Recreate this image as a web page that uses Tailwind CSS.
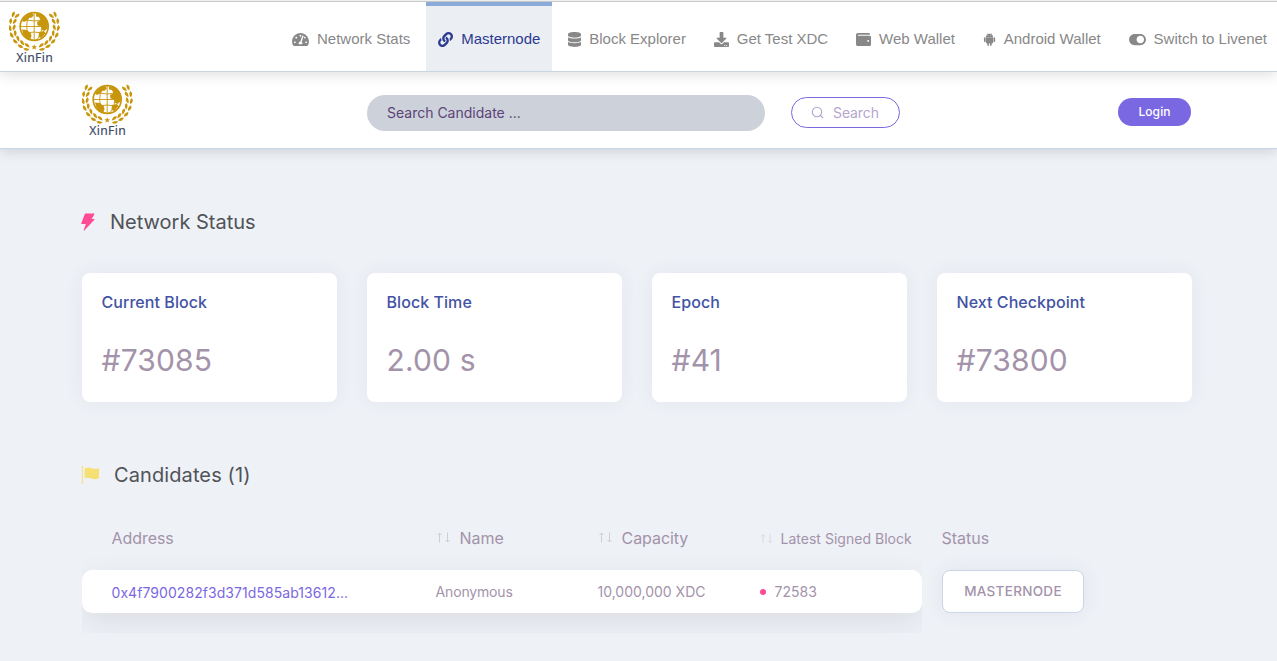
<!DOCTYPE html>
<html lang="en">
<head>
<meta charset="utf-8">
<title>XinFin Masternode</title>
<script src="https://cdn.jsdelivr.net/npm/@tailwindcss/browser@4"></script>
</head>
<body class="h-[661px] overflow-hidden border-t border-[#eeefef] bg-[#eef1f6] font-['Inter',sans-serif] text-[#a393aa]">
<svg class="hidden">
  <defs>
    <g id="leaf">
      <path d="M-2.400 -23.600Q.8 -27.400 4 -24.200Q1 -21.600 -2.400 -23.600Z"/>
      <path d="M-1.800 -21.400Q1.200 -16.800 4.400 -19.200Q2.400 -22.400 -1.800 -21.400Z"/>
    </g>
    <g id="branch">
      <use href="#leaf" transform="rotate(-62)"/>
      <use href="#leaf" transform="rotate(-79)"/>
      <use href="#leaf" transform="rotate(-96)"/>
      <use href="#leaf" transform="rotate(-113)"/>
      <use href="#leaf" transform="rotate(-130)"/>
      <use href="#leaf" transform="rotate(-147)"/>
      <use href="#leaf" transform="rotate(-163)"/>
    </g>
    <symbol id="logo" viewBox="0 0 52 54">
      <g fill="#c8960c">
        <use href="#branch" transform="translate(25.200 15.500)"/>
        <use href="#branch" transform="translate(25.200 15.500) scale(-1 1)"/>
        <path d="M25.200 33.300l.8 1.900 2 .1-1.500 1.300.5 2-1.800-1.100-1.800 1.100.5-2-1.500-1.300 2-.1z"/>
      </g>
      <circle cx="25.200" cy="15.500" r="14" fill="#fff" stroke="#c8960c" stroke-width="1.700"/>
      <g fill="none" stroke="#c8960c" stroke-width=".9">
        <path d="M25.200 1.500v28M11.200 15.500h28M13.500 8.500q11.700 3 23.400 0M13.500 22.500q11.700-3 23.400 0"/>
        <ellipse cx="25.200" cy="15.500" rx="7.500" ry="14"/>
      </g>
      <path fill="#c8960c" d="M13 10Q16 3.500 22.500 2l2.500 2-2 2.500-3 .5-2 2.500-3 1.500zM27 3l4-1.300Q38 5 39 12l-.5 5.500-3 2.500-2.500-1-.5-3.500-4-1-.5-3.500 4-2-2-3-3-.5zM13 18.500l5 .5 4 3.500.5 3-2.500 3.500Q14 25.500 13 18.500zM30 21l5-1 1.500 2-4 5-3-1z"/>
      <text x="25.500" y="51" text-anchor="middle" textLength="36.500" font-family="Noto Sans, sans-serif" font-size="12.200" fill="#3c4866" stroke="#3c4866" stroke-width=".15">XinFin</text>
    </symbol>
    <symbol id="sort" viewBox="0 0 16 12">
      <path fill="none" stroke="currentColor" d="M3.500 10.500V1M1.500 3l2-2 2 2M11.500.5V10M9.500 8l2 2 2-2"/>
    </symbol>
  </defs>
</svg>

<header class="relative z-20 flex h-[71px] justify-between border-y border-t-[#c6c9c9] border-b-[#c9d6e2] bg-white pr-2.5 pl-[9px] shadow-[0_2px_14px_rgba(0,0,0,0.14)]">
  <svg class="mt-[9px] h-[54px] w-[52px]"><use href="#logo"/></svg>
  <nav class="flex gap-[3.85px] font-['Liberation_Sans',sans-serif] text-[15px] text-[#888] [&_svg]:h-[15px] [&_svg]:fill-current">
    <a class="flex items-center gap-2 px-3 pt-[5px]"><svg class="w-[17px]" viewBox="0 0 576 512"><path d="M288 32C128.940 32 0 160.940 0 320c0 52.800 14.250 102.260 39.060 144.800 5.610 9.620 16.300 15.200 27.440 15.200h443c11.140 0 21.830-5.580 27.440-15.200C561.750 422.260 576 372.800 576 320c0-159.060-128.940-288-288-288zm0 64c14.710 0 26.580 10.130 30.320 23.650-1.110 2.260-2.640 4.230-3.450 6.670l-9.220 27.670c-5.130 3.490-10.970 6.010-17.640 6.010-17.670 0-32-14.330-32-32S270.330 96 288 96zM96 384c-17.670 0-32-14.330-32-32s14.330-32 32-32 32 14.330 32 32-14.330 32-32 32zm48-160c-17.670 0-32-14.330-32-32s14.330-32 32-32 32 14.330 32 32-14.330 32-32 32zm246.770-72.410l-61.330 184C343.130 347.330 352 364.540 352 384c0 11.720-3.380 22.550-8.880 32H232.880c-5.500-9.450-8.880-20.280-8.880-32 0-33.940 26.500-61.430 59.900-63.590l61.340-184.010c4.170-12.560 17.730-19.450 30.360-15.170 12.570 4.190 19.350 17.790 15.170 30.360zm14.660 57.200l15.520-46.550c3.470-1.290 7.130-2.230 11.050-2.230 17.670 0 32 14.330 32 32s-14.330 32-32 32c-11.380-.01-20.890-6.280-26.570-15.220zM480 384c-17.670 0-32-14.330-32-32s14.330-32 32-32 32 14.330 32 32-14.330 32-32 32z"/></svg>Network Stats</a>
    <a class="flex items-center gap-2 border-t-4 border-[#8aabd8] bg-[#ebeef3] px-3 pt-px text-[#2c3b91]"><svg class="w-[15px]" viewBox="0 0 512 512"><path d="M326.612 185.391c59.747 59.809 58.927 155.698.36 214.590-.11.120-.24.250-.36.370l-67.200 67.200c-59.270 59.270-155.699 59.262-214.960 0-59.270-59.260-59.270-155.700 0-214.960l37.106-37.106c9.840-9.840 26.786-3.300 27.294 10.606.648 17.722 3.826 35.527 9.690 52.721 1.986 5.822.567 12.262-3.783 16.612l-13.087 13.087c-28.026 28.026-28.905 73.660-1.155 101.960 28.024 28.579 74.086 28.749 102.325.51l67.200-67.190c28.191-28.191 28.073-73.757 0-101.830-3.701-3.694-7.429-6.564-10.341-8.569a16.037 16.037 0 0 1-6.947-12.606c-.396-10.567 3.348-21.456 11.698-29.806l21.054-21.055c5.521-5.521 14.182-6.199 20.584-1.731a152.482 152.482 0 0 1 20.522 17.197zM467.547 44.449c-59.261-59.262-155.690-59.270-214.960 0l-67.200 67.200c-.12.120-.25.250-.36.370-58.566 58.892-59.387 154.781.36 214.590a152.454 152.454 0 0 0 20.521 17.196c6.402 4.468 15.064 3.789 20.584-1.731l21.054-21.055c8.350-8.350 12.094-19.239 11.698-29.806a16.037 16.037 0 0 0-6.947-12.606c-2.912-2.005-6.640-4.875-10.341-8.569-28.073-28.073-28.191-73.639 0-101.830l67.200-67.190c28.239-28.239 74.300-28.069 102.325.51 27.750 28.300 26.872 73.934-1.155 101.960l-13.087 13.087c-4.350 4.350-5.769 10.790-3.783 16.612 5.864 17.194 9.042 34.999 9.690 52.721.509 13.906 17.454 20.446 27.294 10.606l37.106-37.106c59.271-59.259 59.271-155.699.001-214.959z"/></svg>Masternode</a>
    <a class="flex items-center gap-2 px-3 pt-[5px]"><svg class="w-[13px]" viewBox="0 0 448 512"><path d="M448 73.143v45.714C448 159.143 347.667 192 224 192S0 159.143 0 118.857V73.143C0 32.857 100.333 0 224 0s224 32.857 224 73.143zM448 176v102.857C448 319.143 347.667 352 224 352S0 319.143 0 278.857V176c48.125 33.143 136.208 48.572 224 48.572S399.874 209.143 448 176zm0 160v102.857C448 479.143 347.667 512 224 512S0 479.143 0 438.857V336c48.125 33.143 136.208 48.572 224 48.572S399.874 369.143 448 336z"/></svg>Block Explorer</a>
    <a class="flex items-center gap-2 px-3 pt-[5px]"><svg class="w-[15px]" viewBox="0 0 512 512"><path d="M216 0h80c13.300 0 24 10.700 24 24v168h87.700c17.800 0 26.700 21.500 14.100 34.100L269.700 378.300c-7.500 7.500-19.800 7.500-27.300 0L90.100 226.100c-12.600-12.600-3.700-34.100 14.100-34.100H192V24c0-13.300 10.700-24 24-24zm296 376v112c0 13.300-10.700 24-24 24H24c-13.300 0-24-10.700-24-24V376c0-13.300 10.700-24 24-24h146.700l49 49c20.100 20.100 52.500 20.100 72.600 0l49-49H488c13.300 0 24 10.700 24 24zm-124 88c0-11-9-20-20-20s-20 9-20 20 9 20 20 20 20-9 20-20zm64 0c0-11-9-20-20-20s-20 9-20 20 9 20 20 20 20-9 20-20z"/></svg>Get Test XDC</a>
    <a class="flex items-center gap-2 px-3 pt-[5px]"><svg class="w-[15px]" viewBox="0 0 512 512"><path d="M461.200 128H80c-8.840 0-16-7.160-16-16s7.160-16 16-16h384c8.840 0 16-7.160 16-16 0-26.510-21.490-48-48-48H64C28.650 32 0 60.650 0 96v320c0 35.350 28.650 64 64 64h397.200c28.020 0 50.800-21.530 50.800-48V176c0-26.470-22.780-48-50.800-48zM416 336c-17.670 0-32-14.330-32-32s14.330-32 32-32 32 14.330 32 32-14.330 32-32 32z"/></svg>Web Wallet</a>
    <a class="flex items-center gap-2 px-3 pt-[5px]"><svg class="w-[13px]" viewBox="0 0 448 512"><path d="M89.600 204.500v115.800c0 15.400-12.100 27.700-27.500 27.700-15.300 0-30.100-12.400-30.100-27.700V204.500c0-15.100 14.800-27.500 30.100-27.500 15.100 0 27.500 12.400 27.500 27.500zm10.800 157c0 16.400 13.200 29.600 29.600 29.600h19.900l.3 61.100c0 36.900 55.200 36.600 55.200 0v-61.100h37.200v61.100c0 36.700 55.500 36.800 55.500 0v-61.100h20.200c16.200 0 29.400-13.200 29.400-29.600V182.100H100.400v179.400zm248-189.100H99.300c0-42.800 25.600-80 63.600-99.400l-19.100-35.300c-2.800-4.900 4.300-8 6.700-3.800l19.400 35.600c34.900-15.500 75-14.700 108.300 0L297.500 34c2.500-4.300 9.500-1.100 6.700 3.800L285.100 73c37.700 19.400 63.300 56.600 63.300 99.400zm-170.700-55.500c0-5.700-4.600-10.500-10.500-10.500-5.700 0-10.200 4.800-10.200 10.500s4.600 10.500 10.200 10.500c5.900 0 10.500-4.800 10.500-10.500zm97.800 0c0-5.700-4.600-10.500-10.200-10.500-5.900 0-10.500 4.800-10.500 10.500s4.600 10.500 10.500 10.500c5.600 0 10.200-4.800 10.200-10.500zm113.100 60.100c-15.100 0-27.500 12.100-27.500 27.500v115.800c0 15.400 12.400 27.700 27.500 27.700 15.400 0 30.100-12.400 30.100-27.700V204.500c0-15.400-14.800-27.500-30.100-27.500z"/></svg>Android Wallet</a>
    <a class="flex items-center gap-2 pt-[5px] pl-3"><svg class="w-[17px]" viewBox="0 0 576 512"><path d="M384 64H192C86 64 0 150 0 256s86 192 192 192h192c106 0 192-86 192-192S490 64 384 64zm0 320c-70.800 0-128-57.300-128-128 0-70.800 57.300-128 128-128 70.800 0 128 57.300 128 128 0 70.800-57.300 128-128 128z"/></svg>Switch to Livenet</a>
  </nav>
</header>

<section class="relative z-10 flex h-[77px] items-start border-b border-[#c3d5e8] bg-white pl-[82px] shadow-[0_2px_12px_rgba(0,0,0,0.14)]">
  <svg class="mt-3 h-[54px] w-[52px]"><use href="#logo"/></svg>
  <div class="mt-[23px] ml-[233px] flex h-9 w-[398px] items-center rounded-full bg-[#cdd1da] px-5 text-sm text-[#5b4378]">Search Candidate ...</div>
  <button class="mt-[25px] ml-[26px] flex h-[31px] w-[109px] items-center gap-[9px] rounded-full border border-[#7b68e0] pl-[19px] text-sm tracking-[-0.1px] text-[#b5a6cd]">
    <svg class="size-[13px]" viewBox="0 0 13 13" fill="none" stroke="#b5a6cd" stroke-width="1.100"><circle cx="6" cy="6" r="4.700"/><path d="M9 9l3 3"/></svg>Search</button>
  <button class="mt-[26px] ml-[218px] h-7 w-[73px] rounded-full bg-[#7a68e2] text-xs font-medium tracking-[0.1px] text-white">Login</button>
</section>

<main class="ml-[82px] w-[1110px]">
  <h2 class="flex items-center gap-[15px] pt-[59px] text-xl leading-7 text-[#505358]">
    <svg class="-ml-px h-[18px] w-[14px]" viewBox="0 0 14 18"><path fill="#ff4a94" d="M4.500.5H13.300Q13.800.5 13.500 1L10.700 6H13q.9 0 .4.800L3.300 17.500q-.7.500-.6-.3L4.800 11H.7Q0 11 .3 10.200L3.800 1Q4 .5 4.500.5z"/></svg>Network Status</h2>
  <div class="mt-[37px] grid grid-cols-4 gap-[30px] [&>div]:h-[129px] [&>div]:rounded-lg [&>div]:bg-white [&>div]:pr-5 [&>div]:pl-[19.500px] [&>div]:pt-[17px] [&>div]:shadow-[0_0_20px_rgba(50,70,100,0.06)] [&_h3]:text-base [&_h3]:leading-6 [&_h3]:font-medium [&_h3]:tracking-[0.06px] [&_h3]:text-[#4353a4] [&_p]:mt-[26px] [&_p]:text-[30px] [&_p]:leading-10 [&_p]:tracking-[0.15px]">
    <div><h3>Current Block</h3><p>#73085</p></div>
    <div><h3>Block Time</h3><p>2.00 s</p></div>
    <div><h3>Epoch</h3><p>#41</p></div>
    <div><h3>Next Checkpoint</h3><p>#73800</p></div>
  </div>

  <h2 class="mt-[59px] flex items-center gap-[15px] text-xl leading-7 tracking-[0.1px] text-[#505358]">
    <svg class="-ml-px h-[18px] w-[18px]" viewBox="0 0 18 18" fill="#f6e074"><path d="M.5 1q0-1 .9-1t.9 1q0 .6-.4.800v14q.4.200.4.800 0 .9-.9.900T.5 16.600q0-.5.400-.8v-14Q.5 1.600.5 1z"/><path d="M3.700 2.500Q7 .8 10.500 2.200T18 2V12q-3.500 2-7.500.6T3.700 12z"/></svg>Candidates (1)</h2>

  <div class="mt-[31px] flex">
    <div class="h-[113px] w-[840px] overflow-hidden">
      <div class="grid h-9 grid-cols-[324px_162px_162px_auto] items-center pl-[29.500px] text-base tracking-[-0.05px]">
        <span>Address</span>
        <span class="flex items-center gap-2"><svg class="h-3 w-4 text-[#d0cdd4]"><use href="#sort"/></svg>Name</span>
        <span class="flex items-center gap-2"><svg class="h-3 w-4 text-[#d0cdd4]"><use href="#sort"/></svg>Capacity</span>
        <span class="flex items-center gap-[7px] pt-px text-sm tracking-[0.02px]"><svg class="h-3 w-[14px] text-[#d9d6dc]"><use href="#sort"/></svg>Latest Signed Block</span>
      </div>
      <div class="mt-[14px] grid h-[43px] grid-cols-[324px_162px_162px_auto] items-center rounded-[10px] bg-white pl-[29.500px] text-sm shadow-[0_10px_30px_rgba(30,40,60,0.09)]">
        <span class="pt-0.5 tracking-[0.06px] text-[#7a68e2]">0x4f7900282f3d371d585ab13612...</span>
        <span class="tracking-[-0.15px]">Anonymous</span>
        <span>10,000,000 XDC</span>
        <span class="flex items-center gap-[9px]"><i class="size-1.5 rounded-full bg-[#ff4a94]"></i>72583</span>
      </div>
    </div>
    <div class="ml-[19.500px]">
      <div class="flex h-9 items-center text-base">Status</div>
      <div class="mt-[14px] ml-[0.500px] flex h-[43px] w-[142px] items-center justify-center rounded-lg border border-[#cbd7e6] bg-white text-[13.500px] font-medium tracking-[0.3px] shadow-[0_0_20px_rgba(50,70,100,0.07)]">MASTERNODE</div>
    </div>
  </div>
</main>
</body>
</html>
